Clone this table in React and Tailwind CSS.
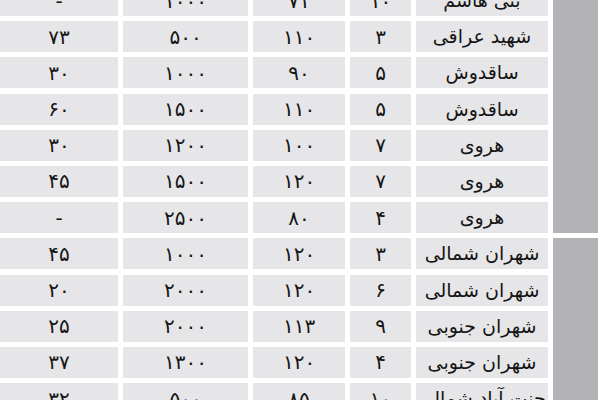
import React from "react";

const rows = [
  ["بنی هاشم", "۱۰", "۷۱", "۱۰۰۰", "-"],
  ["شهید عراقی", "۳", "۱۱۰", "۵۰۰", "۷۳"],
  ["ساقدوش", "۵", "۹۰", "۱۰۰۰", "۳۰"],
  ["ساقدوش", "۵", "۱۱۰", "۱۵۰۰", "۶۰"],
  ["هروی", "۷", "۱۰۰", "۱۲۰۰", "۳۰"],
  ["هروی", "۷", "۱۲۰", "۱۵۰۰", "۴۵"],
  ["هروی", "۴", "۸۰", "۲۵۰۰", "-"],
  ["شهران شمالی", "۳", "۱۲۰", "۱۰۰۰", "۴۵"],
  ["شهران شمالی", "۶", "۱۲۰", "۲۰۰۰", "۲۰"],
  ["شهران جنوبی", "۹", "۱۱۳", "۲۰۰۰", "۲۵"],
  ["شهران جنوبی", "۴", "۱۲۰", "۱۳۰۰", "۳۷"],
  ["جنت آباد شمالی", "۱۰", "۸۵", "۵۰۰", "۳۲"],
];

const Cell = ({ children, name }) => (
  <div
    className={
      "bg-[#e6e6e8] flex items-center justify-center text-[#151515] leading-none " +
      (name ? "text-[19px]" : "text-[20px]")
    }
  >
    {children}
  </div>
);

export default function App() {
  return (
    <div className="w-[600px] h-[400px] overflow-hidden bg-white">
      <div
        dir="rtl"
        className="-mt-[15px] mr-[2px] grid grid-cols-[45px_132px_61px_92px_125px_118px] auto-rows-[31px] gap-x-[5px] gap-y-[5.2px]"
        style={{ fontFamily: '"DejaVu Sans", sans-serif' }}
      >
        {rows.map((r, i) => (
          <React.Fragment key={i}>
            {i === 0 && <div className="row-span-7 bg-[#b3b3b7]" />}
            {i === 7 && <div className="row-span-5 bg-[#b3b3b7]" />}
            {r.map((v, j) => (
              <Cell key={j} name={j === 0}>
                {v}
              </Cell>
            ))}
          </React.Fragment>
        ))}
      </div>
    </div>
  );
}
